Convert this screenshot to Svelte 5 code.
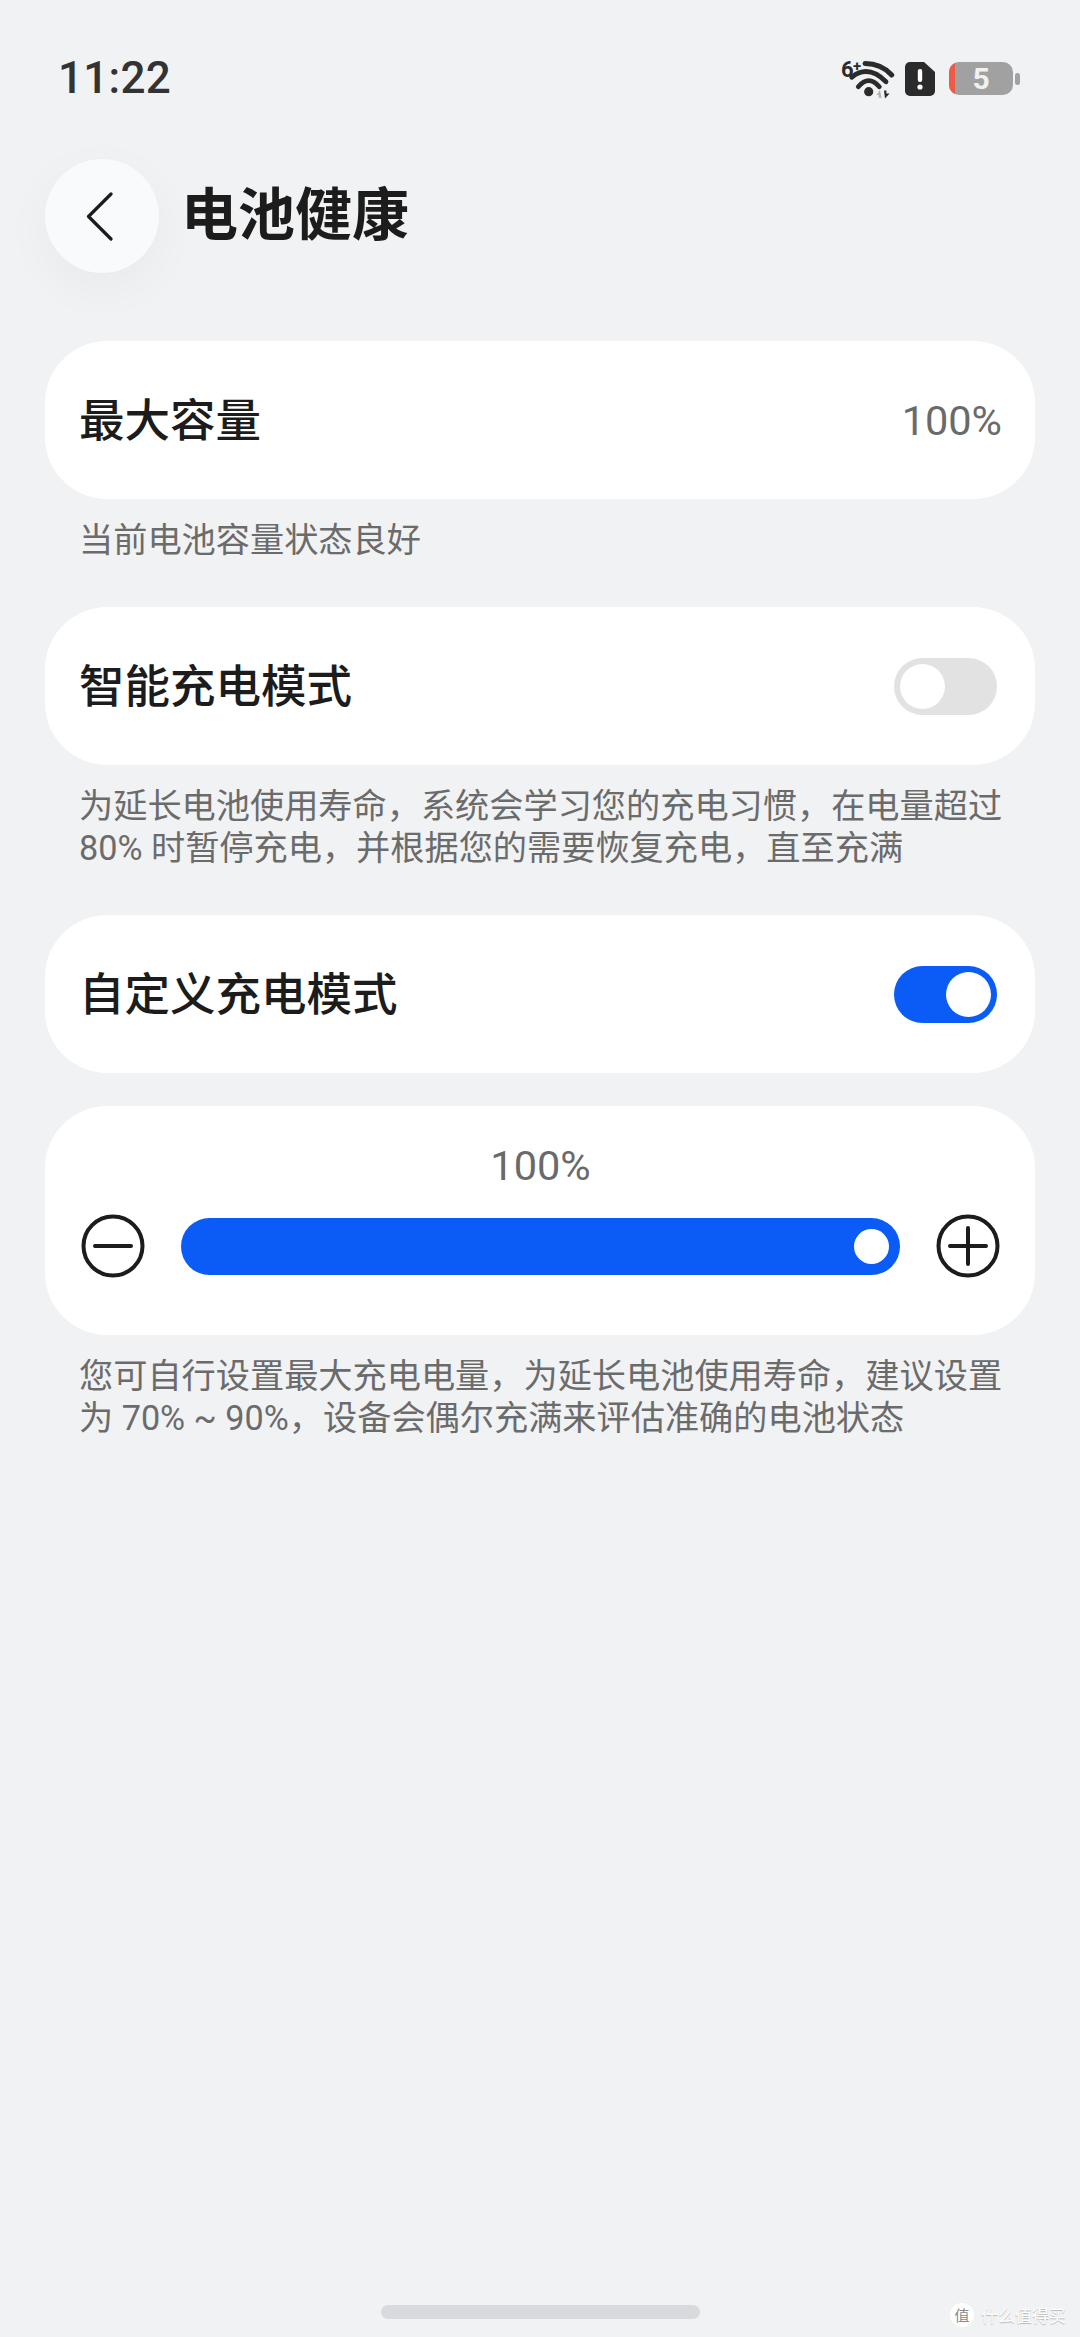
<script>
  const cap1 = '当前电池容量状态良好';
  const cap2 = '为延长电池使用寿命，系统会学习您的充电习惯，在电量超过 80% 时暂停充电，并根据您的需要恢复充电，直至充满';
  const cap3 = '您可自行设置最大充电电量，为延长电池使用寿命，建议设置为 70% ~ 90%，设备会偶尔充满来评估准确的电池状态';
</script>

<div class="page">
  <div class="status">
    <span class="time">11:22</span>
    <div class="icons">
      <svg class="wifi" width="56" height="52" viewBox="0 -10 56 52" fill="none">
        <text x="2" y="17" class="six">6</text>
        <text x="14" y="11" class="plus">+</text>
        <path d="M19.3 26.7Q29.7 14.5 40.3 26.7" stroke="#2b2b2b" stroke-width="4.8" stroke-linecap="round"/>
        <path d="M12.7 17.3Q29 4 47 21.7" stroke="#2b2b2b" stroke-width="4.8" stroke-linecap="round"/>
        <path d="M26 3.600Q42 3.500 52.700 15" stroke="#2b2b2b" stroke-width="5" stroke-linecap="round"/>
        <circle cx="29.7" cy="31.7" r="4.6" fill="#2b2b2b"/>
        <path d="M41 30l-3.500 5h2.200v3h2.800z" fill="#b5b5b5"/>
        <path d="M45 30.500h2.400v3h3.200l-4.600 5z" fill="#2b2b2b"/>
      </svg>
      <svg class="sim" width="30" height="34" viewBox="0 0 30 34">
        <path d="M5 0H19L30 10V29a5 5 0 0 1-5 5H5a5 5 0 0 1-5-5V5a5 5 0 0 1 5-5Z" fill="#2b2b2b"/>
        <rect x="12.8" y="7" width="4.4" height="13" rx="2" fill="#fff"/>
        <circle cx="15" cy="25" r="2.6" fill="#fff"/>
      </svg>
      <div class="battery">
        <div class="cell"><i class="low"></i><b>5</b></div>
        <i class="nub"></i>
      </div>
    </div>
  </div>

  <header class="head">
    <button class="back" aria-label="返回">
      <svg width="27" height="49" viewBox="0 0 27 49" fill="none">
        <path d="M25 2L2.500 24.500 25 47" stroke="#1c1c1c" stroke-width="3.200" stroke-linecap="round" stroke-linejoin="round"/>
      </svg>
    </button>
    <h1>电池健康</h1>
  </header>

  <main class="list">
    <section class="card row">
      <span class="label">最大容量</span>
      <span class="value">100%</span>
    </section>
    <p class="caption">{cap1}</p>

    <section class="card row">
      <span class="label">智能充电模式</span>
      <span class="toggle"><i></i></span>
    </section>
    <p class="caption">{cap2}</p>

    <section class="card row">
      <span class="label">自定义充电模式</span>
      <span class="toggle on"><i></i></span>
    </section>

    <section class="card slider-card">
      <div class="pct">100%</div>
      <div class="slider-row">
        <svg width="64" height="64" viewBox="0 0 64 64" fill="none">
          <circle cx="32" cy="32" r="29.500" stroke="#1c1c1c" stroke-width="4"/>
          <path d="M14 32H50" stroke="#1c1c1c" stroke-width="4" stroke-linecap="round"/>
        </svg>
        <div class="track"><i></i></div>
        <svg width="64" height="64" viewBox="0 0 64 64" fill="none">
          <circle cx="32" cy="32" r="29.500" stroke="#1c1c1c" stroke-width="4"/>
          <path d="M14 32H50M32 14V50" stroke="#1c1c1c" stroke-width="4" stroke-linecap="round"/>
        </svg>
      </div>
    </section>
    <p class="caption">{cap3}</p>
  </main>

  <div class="home"></div>

  <div class="mark">
    <span class="seal">值</span>
    <span>什么值得买</span>
  </div>
</div>

<style>
  :global(body) {
    margin: 0;
    background: #f1f2f4;
  }
  .page {
    position: relative;
    width: 1080px;
    height: 2337px;
    box-sizing: border-box;
    display: flex;
    flex-direction: column;
    overflow: hidden;
    background: #f1f2f4;
    font-family: Roboto, "Noto Sans CJK SC", sans-serif;
  }
  .status {
    height: 159px;
    box-sizing: border-box;
    padding: 52px 60px 0 58px;
    display: flex;
    justify-content: space-between;
    align-items: flex-start;
  }
  .time {
    font-size: 44px;
    line-height: 52px;
    font-weight: 500;
    color: #333;
    letter-spacing: 0.3px;
  }
  .icons {
    display: flex;
    align-items: flex-start;
    margin-top: 8px;
  }
  .wifi {
    display: block;
    margin: -10px 10px 0 0;
  }
  .six {
    font: 700 22px Roboto, sans-serif;
    fill: #2b2b2b;
  }
  .plus {
    font: 700 15px Roboto, sans-serif;
    fill: #2b2b2b;
  }
  .sim {
    display: block;
    margin: 2px 14px 0 0;
  }
  .battery {
    display: flex;
    align-items: center;
    gap: 2px;
    margin-top: 2px;
  }
  .cell {
    position: relative;
    width: 64px;
    height: 33px;
    border-radius: 10px;
    overflow: hidden;
    background: #a1a1a1;
    display: flex;
    align-items: center;
    justify-content: center;
  }
  .cell b {
    color: #f1f1f1;
    font-size: 30px;
    line-height: 33px;
    font-weight: 700;
  }
  .low {
    position: absolute;
    left: 0;
    top: 0;
    bottom: 0;
    width: 6px;
    background: #ef5b47;
  }
  .nub {
    width: 5px;
    height: 12px;
    border-radius: 3px;
    background: #a1a1a1;
  }
  .head {
    display: flex;
    align-items: center;
    gap: 22px;
    padding-left: 45px;
    height: 114px;
  }
  .back {
    width: 114px;
    height: 114px;
    padding: 0 6px 0 0;
    border: 0;
    border-radius: 50%;
    background: #f9fafc;
    box-shadow: 0 14px 50px rgba(0, 0, 0, 0.04);
    display: flex;
    align-items: center;
    justify-content: center;
  }
  h1 {
    margin: 0;
    font-size: 57px;
    line-height: 70px;
    font-weight: 700;
    color: #1c1c1c;
  }
  .list {
    padding: 68px 45px 0;
    display: flex;
    flex-direction: column;
  }
  .card {
    background: #fff;
    border-radius: 62px;
  }
  .row {
    height: 158px;
    box-sizing: border-box;
    padding: 0 34px 0 34px;
    display: flex;
    align-items: center;
    justify-content: space-between;
  }
  .label {
    font-size: 45.5px;
    font-weight: 500;
    color: #1c1c1c;
    position: relative;
    top: -3px;
  }
  .value {
    font-size: 41.5px;
    color: #6a6a6a;
    margin-right: -1px;
  }
  .toggle {
    width: 103px;
    height: 57px;
    margin-right: 4px;
    border-radius: 29px;
    background: #e2e2e2;
    display: flex;
    align-items: center;
    padding: 0 6px;
    box-sizing: border-box;
  }
  .toggle i {
    width: 45px;
    height: 45px;
    border-radius: 50%;
    background: #fff;
  }
  .toggle.on {
    background: #0b5cf6;
    justify-content: flex-end;
  }
  .caption {
    margin: 0;
    padding: 20px 25px 46px 34px;
    font-size: 34.2px;
    line-height: 42px;
    color: #6b6b6b;
  }
  .slider-card {
    margin-top: 33px;
    height: 229px;
    box-sizing: border-box;
    padding: 37px 35px 0 36px;
  }
  .pct {
    text-align: center;
    font-size: 41.5px;
    line-height: 46px;
    color: #6a6a6a;
  }
  .slider-row {
    margin-top: 25px;
    display: flex;
    align-items: center;
    gap: 36px;
  }
  .slider-row svg {
    flex: none;
    display: block;
  }
  .track {
    flex: 1;
    height: 57px;
    border-radius: 29px;
    background: #0b5cf6;
    display: flex;
    align-items: center;
    justify-content: flex-end;
    padding-right: 11px;
  }
  .track i {
    width: 35px;
    height: 35px;
    border-radius: 50%;
    background: #fff;
  }
  .home {
    position: absolute;
    left: 381px;
    bottom: 18px;
    width: 319px;
    height: 14px;
    border-radius: 7px;
    background: #d9dadd;
  }
  .mark {
    position: absolute;
    left: 950px;
    top: 2302px;
    display: flex;
    align-items: center;
    gap: 7px;
    font-size: 17px;
    color: #fff;
    text-shadow: 0 1px 1px rgba(0, 0, 0, 0.25);
  }
  .seal {
    width: 24px;
    height: 24px;
    border-radius: 50%;
    background: #fff;
    color: #8a8a8a;
    font-size: 15px;
    text-shadow: none;
    display: flex;
    align-items: center;
    justify-content: center;
  }
</style>
